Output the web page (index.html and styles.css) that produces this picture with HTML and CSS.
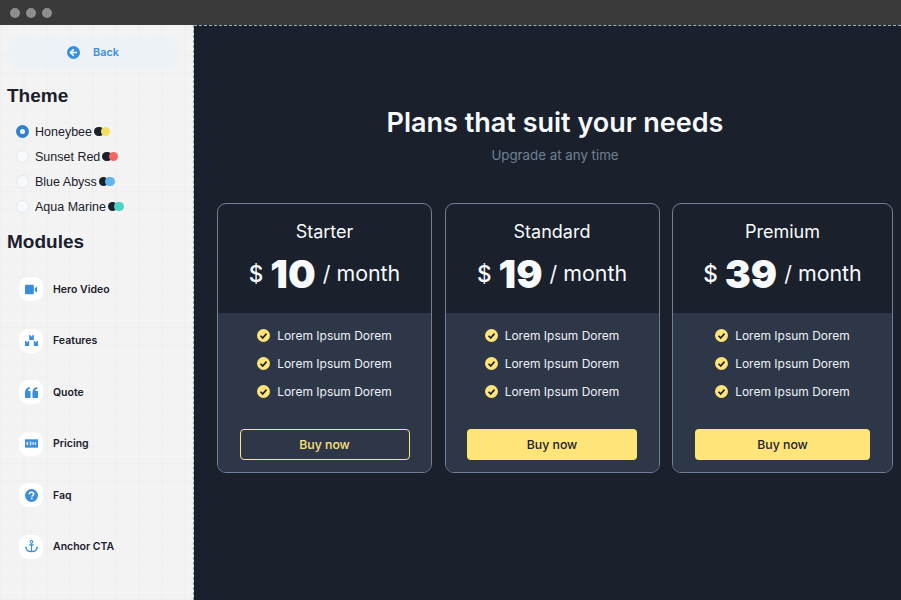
FILE: index.html
```html
<!DOCTYPE html>
<html lang="en">
<head>
    <meta charset="UTF-8">
    <title>Page builder</title>
    <link rel="stylesheet" href="styles.css">
</head>
<body>
    <div class="title-bar">
        <span class="dot"></span>
        <span class="dot"></span>
        <span class="dot"></span>
    </div>

    <div class="app">
        <aside class="sidebar">
            <a class="back-button" href="#">
                <svg class="back-icon" viewBox="0 0 24 24">
                    <circle cx="12" cy="12" r="12" fill="#3a8ee0"></circle>
                    <path d="M12.5 6 L6.5 12 L12.5 18 M7 12 H18.5" fill="none" stroke="#fff" stroke-width="3"></path>
                </svg>
                <span>Back</span>
            </a>

            <h2 class="side-title">Theme</h2>
            <ul class="theme-list">
                <li class="theme-item">
                    <span class="radio checked"></span>
                    <span class="theme-name">Honeybee</span>
                    <span class="swatch"><i class="swatch-dark"></i><i class="swatch-color yellow"></i></span>
                </li>
                <li class="theme-item">
                    <span class="radio"></span>
                    <span class="theme-name">Sunset Red</span>
                    <span class="swatch"><i class="swatch-dark"></i><i class="swatch-color red"></i></span>
                </li>
                <li class="theme-item">
                    <span class="radio"></span>
                    <span class="theme-name">Blue Abyss</span>
                    <span class="swatch"><i class="swatch-dark"></i><i class="swatch-color blue"></i></span>
                </li>
                <li class="theme-item">
                    <span class="radio"></span>
                    <span class="theme-name">Aqua Marine</span>
                    <span class="swatch"><i class="swatch-dark"></i><i class="swatch-color teal"></i></span>
                </li>
            </ul>

            <h2 class="side-title modules-title">Modules</h2>
            <ul class="module-list">
                <li class="module-item">
                    <span class="module-icon">
                        <svg viewBox="0 0 14 12"><rect x="0" y="1" width="9.5" height="10" rx="1" fill="#3a8ee0"></rect><path d="M10.5 5 L13 2.5 V9.5 L10.5 7 Z" fill="#3a8ee0"></path></svg>
                    </span>
                    <span class="module-name">Hero Video</span>
                </li>
                <li class="module-item">
                    <span class="module-icon">
                        <svg viewBox="0 0 14 12"><path d="M4.5 0 H6 V1.5 H8 V0 H9.5 V5.5 H4.5 Z M0 6.5 H1.5 V8 H3 V6.5 H4.5 V12 H0 Z M9.5 6.5 H11 V8 H12.5 V6.5 H14 V12 H9.5 Z" fill="#3a8ee0"></path></svg>
                    </span>
                    <span class="module-name">Features</span>
                </li>
                <li class="module-item">
                    <span class="module-icon">
                        <svg viewBox="0 0 14 12"><path d="M0 6 C0 3 1.5 1 5 0 L5.5 1.8 C4 2.4 3.2 3.2 3 4.5 H6 V11 C6 11.6 5.6 12 5 12 H1 C.4 12 0 11.6 0 11 Z M8 6 C8 3 9.5 1 13 0 L13.5 1.8 C12 2.4 11.2 3.2 11 4.5 H14 V11 C14 11.6 13.6 12 13 12 H9 C8.4 12 8 11.6 8 11 Z" fill="#3a8ee0"></path></svg>
                    </span>
                    <span class="module-name">Quote</span>
                </li>
                <li class="module-item">
                    <span class="module-icon">
                        <svg viewBox="0 0 14 9"><rect width="14" height="9" fill="#3a8ee0"></rect><rect x="1.5" y="3" width="2" height="3" fill="#dbe9f6"></rect><rect x="5.2" y="2.5" width="1.6" height="4" fill="#dbe9f6"></rect><rect x="8" y="3" width="1.5" height="3" fill="#dbe9f6"></rect><rect x="10.5" y="3" width="1.5" height="3" fill="#dbe9f6"></rect></svg>
                    </span>
                    <span class="module-name">Pricing</span>
                </li>
                <li class="module-item">
                    <span class="module-icon">
                        <svg viewBox="0 0 24 24"><circle cx="12" cy="12" r="12" fill="#3a8ee0"></circle><path d="M8 9.5 C8 7 10 6 12 6 C14.2 6 16 7.3 16 9.3 C16 12 12.7 12 12.7 14.5" fill="none" stroke="#fff" stroke-width="2.8"></path><rect x="11" y="16" width="3" height="3" fill="#fff"></rect></svg>
                    </span>
                    <span class="module-name">Faq</span>
                </li>
                <li class="module-item">
                    <span class="module-icon">
                        <svg viewBox="0 0 14 14"><circle cx="7" cy="2" r="1.4" fill="none" stroke="#3a8ee0" stroke-width="1.1"></circle><path d="M7 3.4 V12.6 M4.6 5.2 H9.4 M1 7.6 C1 10.8 3.6 12.6 7 12.6 C10.4 12.6 13 10.8 13 7.6" fill="none" stroke="#3a8ee0" stroke-width="1.3"></path><path d="M0 8.8 L1 6.8 L2.2 8.8 Z M11.8 8.8 L13 6.8 L14 8.8 Z" fill="#3a8ee0"></path></svg>
                    </span>
                    <span class="module-name">Anchor CTA</span>
                </li>
            </ul>
        </aside>

        <main class="main">
            <h1 class="main-title">Plans that suit your needs</h1>
            <p class="main-subtitle">Upgrade at any time</p>

            <div class="plans" id="plans"></div>
        </main>
    </div>

    <script>
        const plans = [
            { name: 'Starter', price: 10, outline: true },
            { name: 'Standard', price: 19 },
            { name: 'Premium', price: 39 }
        ];

        const check = `
            <svg class="check" viewBox="0 0 24 24">
                <circle cx="12" cy="12" r="12" fill="#ffe47a"></circle>
                <path d="M6.5 12.5 L10.5 16.5 L17.5 8.5" fill="none" stroke="#1a202c" stroke-width="3"></path>
            </svg>`;

        const plansEl = document.getElementById('plans');

        plans.forEach(plan => {
            const card = document.createElement('div');
            card.className = 'plan ' + plan.name.toLowerCase();

            const features = [1, 2, 3].map(() => `<li class="feature">${check}Lorem Ipsum Dorem</li>`).join('');

            card.innerHTML = `
                <div class="plan-head">
                    <h3 class="plan-name">${plan.name}</h3>
                    <p class="plan-price">
                        <span class="currency">$</span>
                        <strong>${plan.price}</strong>
                        <span>/ month</span>
                    </p>
                </div>
                <div class="plan-body">
                    <ul class="features">${features}</ul>
                    <a href="#" class="buy-button ${plan.outline ? 'outline' : ''}">Buy now</a>
                </div>
            `;
            plansEl.appendChild(card);
        });
    </script>
</body>
</html>
```

FILE: styles.css
```css
* {
    margin: 0;
    padding: 0;
    box-sizing: border-box;
}

html, body {
    height: 100%;
    overflow: hidden;
}

body {
    font-family: Inter, "Liberation Sans", sans-serif;
    display: flex;
    flex-direction: column;
    background-color: #1a202c;
}

ul {
    list-style: none;
}

a {
    text-decoration: none;
}

.title-bar {
    height: 25px;
    flex-shrink: 0;
    display: flex;
    align-items: center;
    gap: 6px;
    padding: 1px 0 0 10px;
    background-color: #3a3a3a;
}

.dot {
    width: 10px;
    height: 10px;
    border-radius: 50%;
    background-color: #8e8e8e;
}

.app {
    flex: 1;
    min-height: 0;
    display: flex;
}

.sidebar {
    width: 194px;
    flex-shrink: 0;
    padding: 12px 0 0 7px;
    border-right: 1px dashed #9aa0a8;
    background-color: #f3f3f3;
    background-image:
        repeating-linear-gradient(0deg, rgba(0, 0, 0, 0.012) 0 1px, transparent 1px 7px, rgba(255, 255, 255, 0.12) 7px 9px, transparent 9px 17px),
        repeating-linear-gradient(90deg, rgba(0, 0, 0, 0.012) 0 2px, transparent 2px 11px, rgba(255, 255, 255, 0.12) 11px 12px, transparent 12px 23px);
}

.back-button {
    width: 172px;
    height: 31px;
    display: flex;
    align-items: center;
    justify-content: center;
    gap: 13px;
    border-radius: 12px;
    background-color: #edf2f7;
    color: #3a8ee0;
    font-size: 10.8px;
    font-weight: 600;
}

.back-icon {
    width: 13px;
    height: 13px;
}

.side-title {
    margin-top: 16px;
    font-family: "Liberation Sans", Arial, sans-serif;
    font-size: 19px;
    line-height: 24px;
    font-weight: 700;
    color: #1a202c;
}

.theme-list {
    margin-top: 11px;
    padding-left: 9px;
}

.theme-item {
    height: 25px;
    display: flex;
    align-items: center;
    font-family: "Liberation Sans", Arial, sans-serif;
    font-size: 12.5px;
    color: #1a202c;
}

.radio {
    width: 13px;
    height: 13px;
    margin-right: 6px;
    border-radius: 50%;
    border: 1px solid #e2e8f0;
    background-color: #f7fafc;
}

.radio.checked {
    border: 4px solid #3182ce;
    background-color: #fff;
}

.theme-name {
    white-space: nowrap;
}

.swatch {
    display: flex;
    margin-left: 2px;
}

.swatch i {
    width: 9.5px;
    height: 9.5px;
    border-radius: 50%;
}

.swatch-dark {
    background-color: #1a202c;
}

.swatch-color {
    margin-left: -3px;
}

.yellow { background-color: #f6e05e; }
.red { background-color: #f56565; }
.blue { background-color: #63b3ed; }
.teal { background-color: #4fd1c5; }

.modules-title {
    margin-top: 11px;
}

.module-list {
    margin-top: 23px;
    padding-left: 12px;
    display: flex;
    flex-direction: column;
    gap: 27.6px;
}

.module-item {
    display: flex;
    align-items: center;
    gap: 10px;
}

.module-icon {
    width: 24px;
    height: 24px;
    display: flex;
    align-items: center;
    justify-content: center;
    border-radius: 9px;
    background-color: #fff;
}

.module-icon svg {
    width: 13px;
    height: 13px;
}

.module-name {
    font-size: 10.5px;
    font-weight: 600;
    color: #1a202c;
}

.main {
    flex: 1;
    min-width: 0;
    padding: 79px 8px 0 23px;
    border-top: 1px dashed #a0aec0;
    text-align: center;
}

.main-title {
    font-size: 27px;
    line-height: 36px;
    font-weight: 600;
    color: #f7fafc;
}

.main-subtitle {
    margin-top: 4px;
    font-size: 13.3px;
    line-height: 20px;
    color: #718096;
}

.plans {
    margin-top: 38px;
    display: flex;
    gap: 12.5px;
}

.plan {
    width: 215px;
    height: 270px;
    display: flex;
    flex-direction: column;
    border: 1px solid #718096;
    border-radius: 9px;
    overflow: hidden;
}

.plan.premium {
    width: 221px;
}

.plan-head {
    height: 109px;
    padding-top: 18px;
    color: #f7fafc;
}

.plan-name {
    font-size: 18px;
    line-height: 20px;
    font-weight: 400;
}

.plan-price {
    height: 46px;
    margin-top: 8px;
    display: flex;
    align-items: center;
    justify-content: center;
    gap: 7px;
    font-size: 21.4px;
}

.currency {
    font-size: 22.5px;
    font-weight: 500;
}

.plan-price strong {
    font-size: 39px;
    font-weight: 900;
}

.plan-body {
    flex: 1;
    padding: 8px 21.5px 0;
    background-color: #2d3748;
}

.premium .plan-body {
    padding: 8px 22px 0;
}

.features {
    height: 108px;
}

.feature {
    height: 28px;
    display: flex;
    align-items: center;
    justify-content: center;
    gap: 7px;
    font-size: 12px;
    color: #edf2f7;
}

.check {
    width: 13px;
    height: 13px;
}

.buy-button {
    height: 31px;
    display: flex;
    align-items: center;
    justify-content: center;
    border-radius: 4px;
    background-color: #ffe47a;
    color: #1a202c;
    font-size: 12.3px;
    font-weight: 500;
}

.buy-button.outline {
    border: 1px solid #ffe47a;
    background-color: transparent;
    color: #ffe47a;
}
```
